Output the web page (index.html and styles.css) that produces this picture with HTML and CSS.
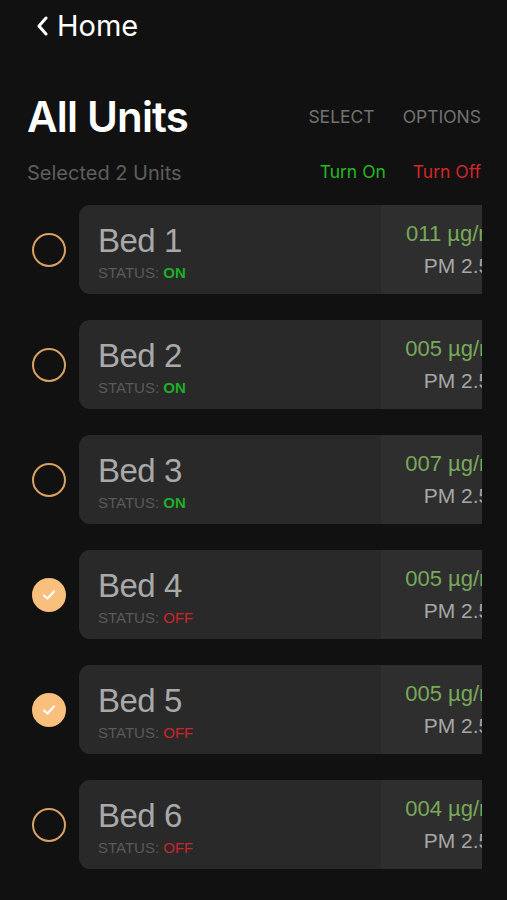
FILE: index.html
```html
<!DOCTYPE html>
<html>
<head>
  <link rel="stylesheet" href="styles.css">
</head>
<body>
  <div class="screen">
    <div class="nav">
      <svg class="nav_back" width="12" height="20" viewBox="0 0 12 20"><path d="M10 2 L3 10 L10 18" fill="none" stroke="#fff" stroke-width="3" stroke-linecap="round" stroke-linejoin="round"/></svg>
      <span class="nav_title">Home</span>
    </div>
    <div class="title_row">
      <div class="title">All Units</div>
      <div class="actions">
        <span class="action">SELECT</span>
        <span class="action">OPTIONS</span>
      </div>
    </div>
    <div class="sub_row">
      <div class="selected">Selected 2 Units</div>
      <div class="toggles">
        <span class="turn_on">Turn On</span>
        <span class="turn_off">Turn Off</span>
      </div>
    </div>
    <div class="list">
      <div class="row">
        <div class="check"></div>
        <div class="card">
          <div class="card_main">
            <div class="bed">Bed 1</div>
            <div class="status">STATUS: <span class="on">ON</span></div>
          </div>
          <div class="card_side">
            <div class="reading">011 µg/m³</div>
            <div class="pm">PM 2.5</div>
          </div>
        </div>
      </div>
      <div class="row">
        <div class="check"></div>
        <div class="card">
          <div class="card_main">
            <div class="bed">Bed 2</div>
            <div class="status">STATUS: <span class="on">ON</span></div>
          </div>
          <div class="card_side">
            <div class="reading">005 µg/m³</div>
            <div class="pm">PM 2.5</div>
          </div>
        </div>
      </div>
      <div class="row">
        <div class="check"></div>
        <div class="card">
          <div class="card_main">
            <div class="bed">Bed 3</div>
            <div class="status">STATUS: <span class="on">ON</span></div>
          </div>
          <div class="card_side">
            <div class="reading">007 µg/m³</div>
            <div class="pm">PM 2.5</div>
          </div>
        </div>
      </div>
      <div class="row">
        <div class="check checked">
          <svg width="14" height="12" viewBox="0 0 14 12"><path d="M2 6.5 L5.5 9.5 L12 2.5" fill="none" stroke="#fff" stroke-width="2.2" stroke-linecap="round" stroke-linejoin="round"/></svg>
        </div>
        <div class="card">
          <div class="card_main">
            <div class="bed">Bed 4</div>
            <div class="status">STATUS: <span class="off">OFF</span></div>
          </div>
          <div class="card_side">
            <div class="reading">005 µg/m³</div>
            <div class="pm">PM 2.5</div>
          </div>
        </div>
      </div>
      <div class="row">
        <div class="check checked">
          <svg width="14" height="12" viewBox="0 0 14 12"><path d="M2 6.5 L5.5 9.5 L12 2.5" fill="none" stroke="#fff" stroke-width="2.2" stroke-linecap="round" stroke-linejoin="round"/></svg>
        </div>
        <div class="card">
          <div class="card_main">
            <div class="bed">Bed 5</div>
            <div class="status">STATUS: <span class="off">OFF</span></div>
          </div>
          <div class="card_side">
            <div class="reading">005 µg/m³</div>
            <div class="pm">PM 2.5</div>
          </div>
        </div>
      </div>
      <div class="row">
        <div class="check"></div>
        <div class="card">
          <div class="card_main">
            <div class="bed">Bed 6</div>
            <div class="status">STATUS: <span class="off">OFF</span></div>
          </div>
          <div class="card_side">
            <div class="reading">004 µg/m³</div>
            <div class="pm">PM 2.5</div>
          </div>
        </div>
      </div>
    </div>
  </div>
</body>
</html>
```
FILE: styles.css
```css
body {
  margin: 0;
  background-color: #111111;
  font-family: Inter, 'Liberation Sans', sans-serif;
  overflow: hidden;
}
.screen {
  width: 507px;
  height: 900px;
}
.nav {
  display: flex;
  align-items: center;
  height: 34px;
  padding-top: 9px;
  padding-left: 36px;
}
.nav_back {
  margin-right: 9px;
}
.nav_title {
  color: #fff;
  font-size: 29px;
  line-height: 34px;
}
.title_row {
  display: flex;
  justify-content: space-between;
  align-items: flex-start;
  padding: 50px 26px 0 27px;
}
.title {
  color: #fff;
  font-size: 42px;
  font-weight: 600;
  letter-spacing: -0.8px;
  line-height: 48px;
}
.actions {
  display: flex;
  gap: 28px;
  padding-top: 13px;
}
.action {
  color: #727272;
  font-size: 17.5px;
  line-height: 22px;
}
.sub_row {
  display: flex;
  justify-content: space-between;
  align-items: flex-end;
  padding: 20px 26px 0 27px;
}
.selected {
  color: #5e5e5e;
  font-size: 20px;
  line-height: 24px;
}
.toggles {
  display: flex;
  gap: 27px;
  padding-bottom: 3px;
}
.turn_on {
  color: #22b822;
  font-size: 17.5px;
}
.turn_off {
  color: #d3262b;
  font-size: 17.5px;
}
.list {
  margin-top: 20px;
  margin-right: 25px;
  overflow: hidden;
  display: flex;
  flex-direction: column;
  gap: 26px;
}
.row {
  display: flex;
  align-items: center;
  padding-left: 32px;
}
.check {
  width: 30px;
  height: 30px;
  border: 2px solid #d9a263;
  border-radius: 50%;
  margin-right: 13px;
  flex: 0 0 auto;
  display: flex;
  align-items: center;
  justify-content: center;
}
.check.checked {
  background-color: #f9bf7d;
  border-color: #f9bf7d;
}
.card {
  flex: 0 0 450px;
  height: 89px;
  display: flex;
  background-color: #292929;
  border-radius: 11px;
  overflow: hidden;
  font-family: 'Liberation Sans', sans-serif;
}
.card_main {
  flex: 1;
  padding: 17px 0 0 19px;
}
.bed {
  color: #a9a9a9;
  font-size: 33px;
  letter-spacing: -0.5px;
  line-height: 38px;
}
.status {
  color: #5a5a5a;
  font-size: 15px;
  line-height: 18px;
  margin-top: 4px;
}
.on {
  color: #1fae28;
  font-weight: bold;
}
.off {
  color: #c9262a;
}
.card_side {
  width: 148px;
  background-color: #2e2e2e;
  text-align: center;
  padding-top: 17px;
  box-sizing: border-box;
}
.reading {
  color: #78a95a;
  font-size: 22px;
  line-height: 24px;
}
.pm {
  color: #a6a6a6;
  font-size: 21px;
  line-height: 24px;
  margin-top: 8px;
  padding-left: 4px;
}
```
